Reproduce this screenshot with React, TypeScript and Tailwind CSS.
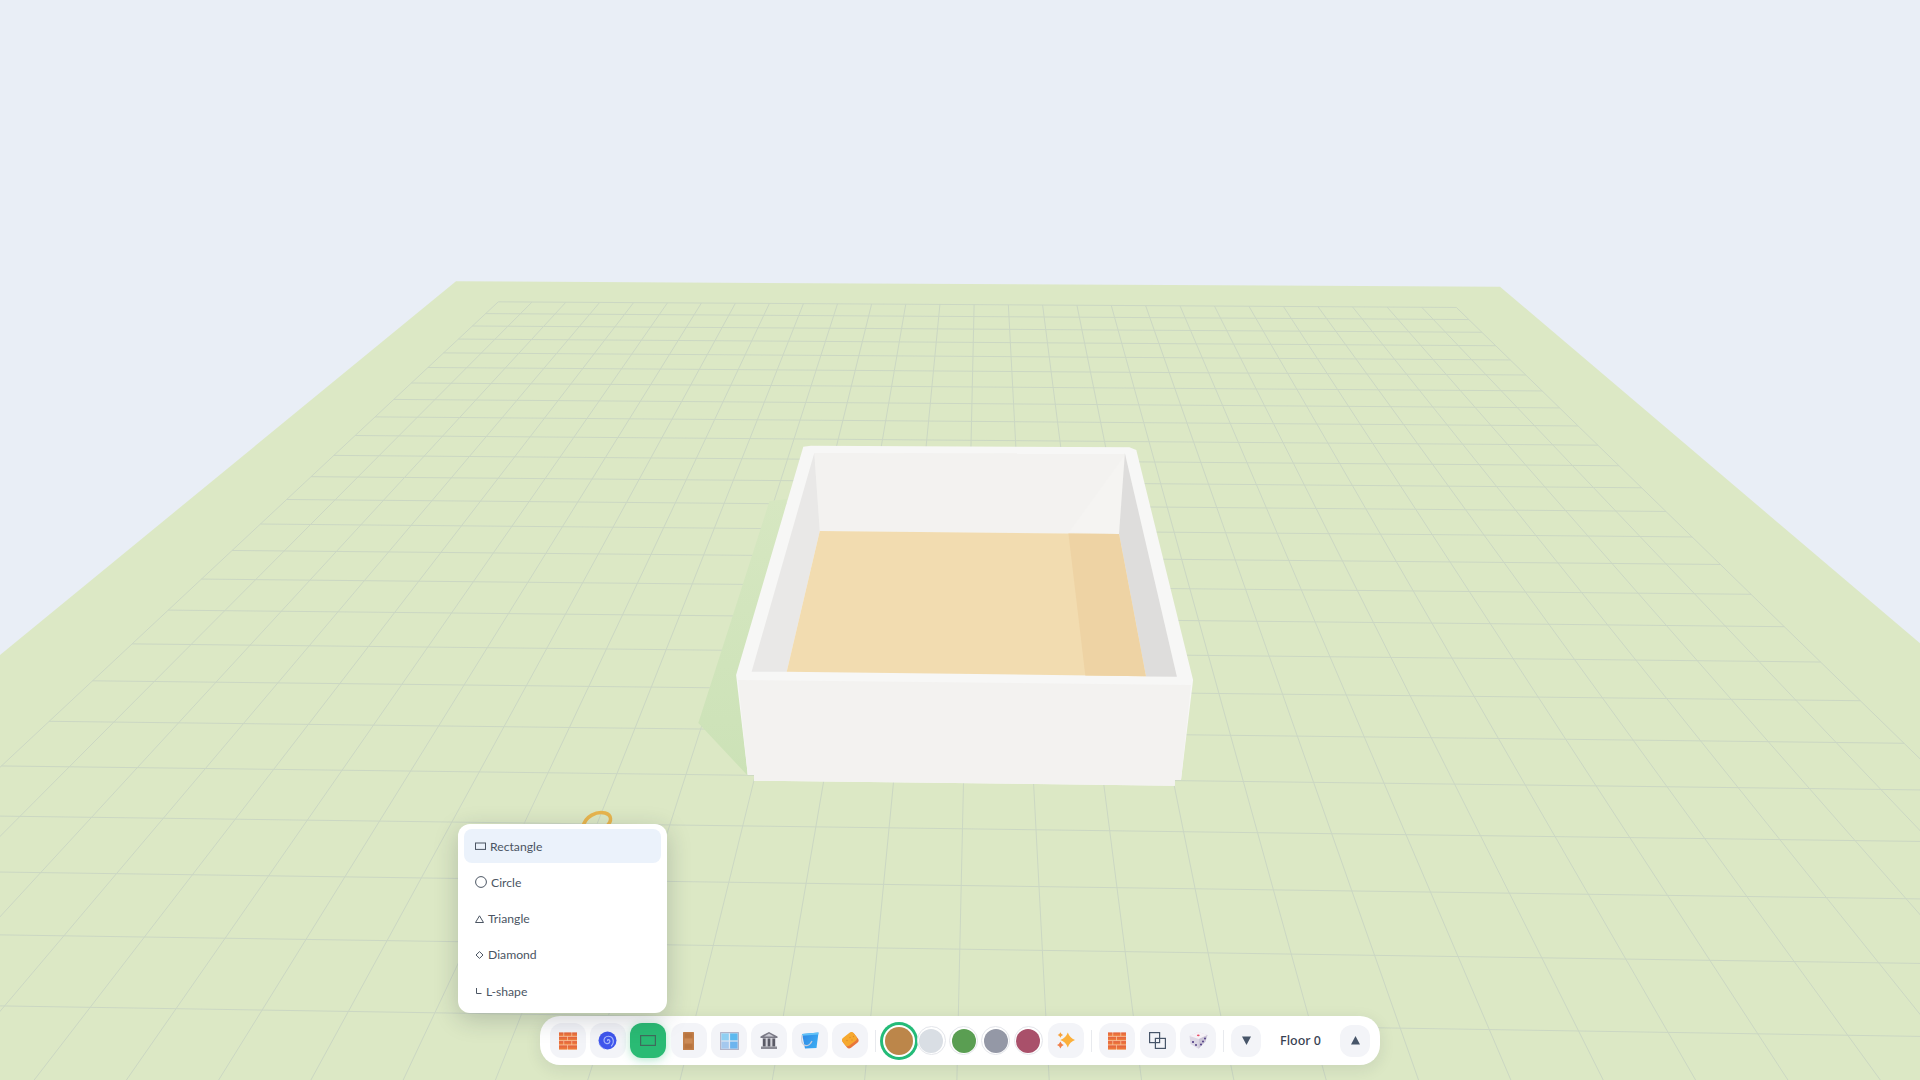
import React from 'react';

type Pt = [number, number];

// grid cell -> screen pixel samples read off the picture
const samples: [number, number, number, number][] = [
  [0, 0, 497, 302],
  [28, 0, 1456.7, 307.3],
  [0, 6, 412.7, 383],
  [28, 10, 1619.3, 465.7],
  [0, 17, 133.3, 643.3],
  [28, 17, 1820, 662.3],
  [0, 18, 92.7, 680.7],
  [0, 19, 49, 721.7],
  [28, 18, 1860, 701],
  [28, 19, 1903.3, 743.3],
  [4, 24, 88.3, 1007.7],
  [8, 24, 435, 1012.7],
  [20, 24, 1489.3, 1029],
  [24, 24, 1849, 1035.3],
  [11, 23, 713.3, 945],
  [14, 23, 959.3, 949.3],
  [16, 23, 1125.7, 952],
];

// least squares homography, everything scaled to about 0..1 to keep it stable
const fitHomography = () => {
  const rows: number[][] = [];
  samples.forEach(([a, b, c, d]) => {
    const u = a / 28, v = b / 28, x = c / 1000, y = d / 1000;
    rows.push([u, v, 1, 0, 0, 0, -u * x, -v * x, x]);
    rows.push([0, 0, 0, u, v, 1, -u * y, -v * y, y]);
  });
  const m = Array.from({ length: 8 }, (_, i) =>
    Array.from({ length: 9 }, (_, j) => rows.reduce((s, r) => s + r[i] * r[j], 0)),
  );
  for (let c = 0; c < 8; c++) {
    let p = c;
    for (let r = c + 1; r < 8; r++) if (Math.abs(m[r][c]) > Math.abs(m[p][c])) p = r;
    [m[c], m[p]] = [m[p], m[c]];
    for (let r = 0; r < 8; r++) {
      if (r === c) continue;
      const f = m[r][c] / m[c][c];
      for (let k = c; k < 9; k++) m[r][k] -= f * m[c][k];
    }
  }
  return m.map((row, i) => row[8] / row[i]);
};

const H = fitHomography();

const project = (a: number, b: number): Pt => {
  const u = a / 28, v = b / 28;
  const w = H[6] * u + H[7] * v + 1;
  return [((H[0] * u + H[1] * v + H[2]) / w) * 1000, ((H[3] * u + H[4] * v + H[5]) / w) * 1000];
};

const gridLines: [Pt, Pt][] = [];
for (let i = 0; i <= 28; i++) {
  gridLines.push([project(i, 0), project(i, 28)]);
  gridLines.push([project(0, i), project(28, i)]);
}

const Scene = () => (
  <svg className="absolute inset-0" width="1920" height="1080" viewBox="0 0 1920 1080">
    <defs>
      <linearGradient id="houseShadow" x1="0" y1="0" x2="0" y2="1">
        <stop offset="0" stopColor="#d6e7c1" />
        <stop offset="1" stopColor="#cce2b7" />
      </linearGradient>
    </defs>
    <polygon points="456,281.3 1500,286.7 1920,643.3 1920,1080 0,1080 0,655" fill="#dce8c5" />
    {gridLines.map(([a, b], i) => (
      <line key={i} x1={a[0]} y1={a[1]} x2={b[0]} y2={b[1]} stroke="#cbd7c3" strokeWidth="1" />
    ))}
    {/* house shadow */}
    <polygon points="769.5,501 787,499 745,700 747.1,775 698.3,723" fill="url(#houseShadow)" />
    {/* walls */}
    <polygon
      points="803.3,446.7 810.9,445.7 1129.4,447.3 1136.3,450 1193.1,680 1181,780 1174.8,780 1174.8,785.7 754,780.7 754,775 747.8,775 736.1,675"
      fill="#f7f7f6"
    />
    <polygon points="814.3,453 1124.9,453.3 1119,534 819.8,531" fill="#f3f2f0" />
    <polygon points="1124.9,455 1119,534 1069,532" fill="#f5f4f2" />
    <polygon points="814.3,453 819.8,531 786.7,671.7 751.6,671.7" fill="#e9e8e7" />
    <polygon points="1124.9,453.3 1119,534 1145.9,676.5 1176.9,676.7" fill="#dedddc" />
    <polygon points="819.8,531 1119,534 1145.9,676.2 786.7,671.7" fill="#f2dcb0" />
    <polygon points="1068.4,533.5 1119,534 1145.9,676.2 1085.3,675.4" fill="#eed3a4" />
    <polygon points="738,680 1191,685 1181,780 1174.8,780 1174.8,785.7 754,780.7 754,775 747.8,775" fill="#f3f2f0" />
    {/* bit of a curve object peeking out behind the menu */}
    <path d="M583 827 C585 816 597 811 605 813 C612 815 612 821 607 826" fill="none" stroke="#e8b54e" strokeWidth="3.5" />
  </svg>
);

const ToolButton = ({ children, active }: { children: React.ReactNode; active?: boolean }) => (
  <button
    className={
      active
        ? 'w-[36px] h-[35px] rounded-[12px] flex items-center justify-center bg-[#2abb74] shadow-[0_2px_10px_rgba(42,187,116,0.35)]'
        : 'w-[36px] h-[35px] rounded-[12px] flex items-center justify-center bg-[#f3f4f8]'
    }
  >
    {children}
  </button>
);

const Bricks = () => (
  <svg width="18" height="18" viewBox="0 0 18 18">
    <defs>
      <linearGradient id="brick" x1="0" y1="0" x2="0" y2="1">
        <stop offset="0" stopColor="#e25f3e" />
        <stop offset="1" stopColor="#f0803a" />
      </linearGradient>
    </defs>
    <rect x="0" y="0.5" width="18" height="17" fill="#f7c09a" />
    <g fill="url(#brick)">
      <rect x="0" y="0.5" width="4.4" height="3.4" />
      <rect x="5.2" y="0.5" width="7.2" height="3.4" />
      <rect x="13.2" y="0.5" width="4.8" height="3.4" />
      <rect x="0" y="4.8" width="8.2" height="3.4" />
      <rect x="9" y="4.8" width="9" height="3.4" />
      <rect x="0" y="9.1" width="4.4" height="3.4" />
      <rect x="5.2" y="9.1" width="7.2" height="3.4" />
      <rect x="13.2" y="9.1" width="4.8" height="3.4" />
      <rect x="0" y="13.4" width="8.2" height="4.1" />
      <rect x="9" y="13.4" width="9" height="4.1" />
    </g>
  </svg>
);

const Spiral = () => (
  <svg width="19" height="19" viewBox="0 0 19 19">
    <circle cx="9.5" cy="9.5" r="9" fill="#3f56ec" />
    <path
      d="M9.7 9.6 C9 8.7 10.8 8 11.6 9.3 C12.6 11 10.8 13 8.7 12.6 C6 12.1 5.3 9 6.8 6.9 C8.6 4.6 12.6 4.7 14.4 7.2 C16 9.6 15.4 13 13.5 14.8"
      fill="none"
      stroke="#a9b8fc"
      strokeWidth="1.2"
      strokeLinecap="round"
    />
    <path d="M1 12 C2 15 4 17 7 18" fill="none" stroke="#7f92f8" strokeWidth="0.8" />
  </svg>
);

const RectIcon = () => (
  <svg width="16" height="11" viewBox="0 0 16 11">
    <rect x="0.6" y="0.6" width="14.8" height="9.8" fill="none" stroke="#3f6b5c" strokeWidth="1.2" />
  </svg>
);

const Door = () => (
  <svg width="11" height="18" viewBox="0 0 11 18">
    <rect width="11" height="18" rx="0.5" fill="#c27f4a" />
    <rect x="1.6" y="1.4" width="7.8" height="4.4" fill="#b8743f" />
    <rect x="1.6" y="6.8" width="7.8" height="4.4" fill="#cb8a55" />
    <rect x="1.6" y="12.2" width="7.8" height="4.4" fill="#b8743f" />
  </svg>
);

const WindowIcon = () => (
  <svg width="19" height="18" viewBox="0 0 19 18">
    <rect width="19" height="18" rx="0.5" fill="#b2b4c8" />
    <rect x="1.2" y="1.2" width="16.6" height="15.6" fill="#dfe7f2" />
    <rect x="1.4" y="1.4" width="7.4" height="7" fill="#8fcff2" />
    <rect x="10.1" y="1.4" width="7.5" height="7" fill="#5cb9ef" />
    <rect x="1.4" y="9.6" width="7.4" height="7" fill="#a4c8ee" />
    <rect x="10.1" y="9.6" width="7.5" height="7" fill="#6db4ee" />
  </svg>
);

const Bank = () => (
  <svg width="18" height="17" viewBox="0 0 18 17">
    <polygon points="9,0 17.5,4.4 17.5,6 0.5,6 0.5,4.4" fill="#7a7a86" />
    <polygon points="9,1.6 14,4.4 4,4.4" fill="#c9c9d2" />
    <rect x="2" y="6" width="14" height="8.5" fill="#d3d3da" />
    <rect x="3" y="6.5" width="2.6" height="8" fill="#5a5a66" />
    <rect x="7.7" y="6.5" width="2.6" height="8" fill="#5a5a66" />
    <rect x="12.4" y="6.5" width="2.6" height="8" fill="#5a5a66" />
    <rect x="1" y="14.5" width="16" height="2.5" fill="#8b8b95" />
  </svg>
);

const Bucket = () => (
  <svg width="18" height="17" viewBox="0 0 18 17">
    <defs>
      <linearGradient id="pail" x1="0" y1="0" x2="1" y2="0.6">
        <stop offset="0" stopColor="#2f86e4" />
        <stop offset="1" stopColor="#3aaaf2" />
      </linearGradient>
    </defs>
    <polygon points="1,2 17.5,0.6 15.5,16 4,16.6" fill="url(#pail)" />
    <polygon points="1,2 17.5,0.6 17.2,2.4 1.2,3.8" fill="#62c2f7" />
    <path d="M1.2 3 C-0.5 10 2 14.5 6.5 13.5 C9 13 10 11 11 9" fill="none" stroke="#c5ccdb" strokeWidth="1.2" />
  </svg>
);

const Sponge = () => (
  <svg width="17" height="17" viewBox="0 0 17 17">
    <g transform="rotate(-38 8.5 8.5)">
      <rect x="1.5" y="2.5" width="14" height="12" rx="3" fill="#e8763a" />
      <rect x="1.5" y="1.8" width="14" height="10" rx="3" fill="#f6a92f" />
    </g>
    <g fill="#dd8a2c">
      <circle cx="8" cy="5.5" r="0.7" />
      <circle cx="11.5" cy="4.5" r="0.7" />
      <circle cx="5" cy="8.5" r="0.7" />
      <circle cx="10" cy="8" r="0.7" />
    </g>
  </svg>
);

const star = (cx: number, cy: number, r: number) => {
  const k = r * 0.26;
  return `M${cx} ${cy - r} Q${cx + k} ${cy - k} ${cx + r} ${cy} Q${cx + k} ${cy + k} ${cx} ${cy + r} Q${cx - k} ${cy + k} ${cx - r} ${cy} Q${cx - k} ${cy - k} ${cx} ${cy - r}Z`;
};

const Sparkles = () => (
  <svg width="18" height="17" viewBox="0 0 18 17">
    <path d={star(10.8, 8, 7.5)} fill="#fbb03b" />
    <path d={star(3.4, 3, 2.7)} fill="#f7a13a" />
    <path d={star(3.4, 13, 3.4)} fill="#f0804a" />
  </svg>
);

const Overlap = () => (
  <svg width="17" height="17" viewBox="0 0 17 17">
    <rect x="0.6" y="0.6" width="10" height="10" fill="none" stroke="#475569" strokeWidth="1.2" />
    <rect x="6.4" y="6.4" width="10" height="10" fill="none" stroke="#475569" strokeWidth="1.2" />
  </svg>
);

const Die = () => (
  <svg width="19" height="17" viewBox="0 0 19 17">
    <polygon points="9,0 18.5,3 16.5,9.5 9.5,16.8 1.5,12 0.5,4" fill="#dcd7e4" />
    <polygon points="9,0 18.5,3 10,7 0.5,4" fill="#f6f2f7" />
    <polygon points="10,7 18.5,3 16.5,9.5 9.5,16.8" fill="#cbc5d7" />
    <ellipse cx="9.3" cy="3.3" rx="1.4" ry="0.9" fill="#ea4e68" />
    <g fill="#44317e">
      <circle cx="4" cy="10" r="1" />
      <circle cx="7" cy="13" r="0.9" />
      <circle cx="12" cy="12.5" r="0.9" />
      <circle cx="14" cy="9.5" r="0.9" />
      <circle cx="16" cy="6.5" r="0.9" />
    </g>
  </svg>
);

const Tri = ({ up }: { up?: boolean }) => (
  <svg width="9" height="9" viewBox="0 0 9 9">
    <polygon points={up ? '4.5,0 9,8.5 0,8.5' : '0,0.5 9,0.5 4.5,9'} fill="#475569" />
  </svg>
);

const Swatch = ({ color, active }: { color: string; active?: boolean }) =>
  active ? (
    <button className="w-[29px] h-[29px] flex items-center justify-center rounded-full">
      <span
        className="block w-[28px] h-[28px] rounded-full shadow-[0_0_0_2px_#ffffff,0_0_0_5px_#24bb78]"
        style={{ backgroundColor: color }}
      />
    </button>
  ) : (
    <button className="w-[29px] h-[29px] flex items-center justify-center rounded-full bg-white border-[1.5px] border-[#e4e6eb]">
      <span className="block w-[24px] h-[24px] rounded-full" style={{ backgroundColor: color }} />
    </button>
  );

const Sep = ({ className }: { className: string }) => <div className={`w-px h-[22px] bg-[#e8eaee] ${className}`} />;

const menuItems: { label: string; icon: React.ReactNode }[] = [
  {
    label: 'Rectangle',
    icon: (
      <svg width="11" height="8" viewBox="0 0 11 8">
        <rect x="0.5" y="1" width="10" height="6.4" fill="none" stroke="#4b5563" />
      </svg>
    ),
  },
  {
    label: 'Circle',
    icon: (
      <svg width="12" height="12" viewBox="0 0 12 12">
        <circle cx="6" cy="6" r="5.4" fill="none" stroke="#4b5563" />
      </svg>
    ),
  },
  {
    label: 'Triangle',
    icon: (
      <svg width="9" height="8" viewBox="0 0 9 8">
        <polygon points="4.5,0.8 8.5,7.5 0.5,7.5" fill="none" stroke="#4b5563" />
      </svg>
    ),
  },
  {
    label: 'Diamond',
    icon: (
      <svg width="9" height="8" viewBox="0 0 9 8">
        <polygon points="4.5,0.6 8,4 4.5,7.4 1,4" fill="none" stroke="#4b5563" />
      </svg>
    ),
  },
  {
    label: 'L-shape',
    icon: (
      <svg width="7" height="6" viewBox="0 0 7 6">
        <path d="M1.5 0V5.5H6.5" fill="none" stroke="#4b5563" />
      </svg>
    ),
  },
];

const ShapeMenu = () => (
  <div className="absolute left-[-82px] bottom-[52px] w-[209px] bg-white rounded-[12px] px-[6px] py-[5px] flex flex-col gap-[2.2px] shadow-[0_6px_24px_rgba(30,41,59,0.22)]">
    {menuItems.map((item, i) => (
      <div
        key={item.label}
        className={`h-[34px] rounded-[8px] pl-[11px] flex items-center gap-[4px] text-[12.2px] text-[#4b5563] ${i === 0 ? 'bg-[#ebf2fb]' : ''}`}
      >
        {item.icon}
        <span className="pt-[1.5px]">{item.label}</span>
      </div>
    ))}
  </div>
);

const App: React.FC = () => {
  return (
    <div className="relative w-full h-screen overflow-hidden bg-[#e9eef6] font-['Lato','Liberation_Sans',sans-serif]">
      <Scene />
      <div className="absolute left-[540px] bottom-[15px] w-[840px] h-[49px]">
        <ShapeMenu />
        <div className="h-full pl-[9.5px] pr-[10px] flex items-center bg-white rounded-[20px] shadow-[0_4px_16px_rgba(30,41,59,0.1)]">
          <div className="flex items-center gap-[4.4px]">
            <ToolButton><Bricks /></ToolButton>
            <ToolButton><Spiral /></ToolButton>
            <ToolButton active><RectIcon /></ToolButton>
            <ToolButton><Door /></ToolButton>
            <ToolButton><WindowIcon /></ToolButton>
            <ToolButton><Bank /></ToolButton>
            <ToolButton><Bucket /></ToolButton>
            <ToolButton><Sponge /></ToolButton>
          </div>
          <Sep className="ml-[7px] mr-[8px]" />
          <div className="flex items-center gap-[3.4px]">
            <Swatch color="#bc864a" active />
            <Swatch color="#d9dee4" />
            <Swatch color="#5a9e52" />
            <Swatch color="#9498a6" />
            <Swatch color="#a9506a" />
          </div>
          <div className="ml-[5px]">
            <ToolButton><Sparkles /></ToolButton>
          </div>
          <Sep className="ml-[7.5px] mr-[7px]" />
          <div className="flex items-center gap-[4.4px]">
            <ToolButton><Bricks /></ToolButton>
            <ToolButton><Overlap /></ToolButton>
            <ToolButton><Die /></ToolButton>
          </div>
          <Sep className="ml-[7px] mr-[7px]" />
          <button className="w-[30px] h-[32px] rounded-[12px] bg-[#f3f4f8] flex items-center justify-center"><Tri /></button>
          <span className="flex-1 text-center pt-[2px] text-[12.5px] font-medium text-[#374151] font-['Noto_Sans',sans-serif]">Floor 0</span>
          <button className="w-[30px] h-[32px] rounded-[12px] bg-[#f3f4f8] flex items-center justify-center"><Tri up /></button>
        </div>
      </div>
    </div>
  );
};

export default App;
